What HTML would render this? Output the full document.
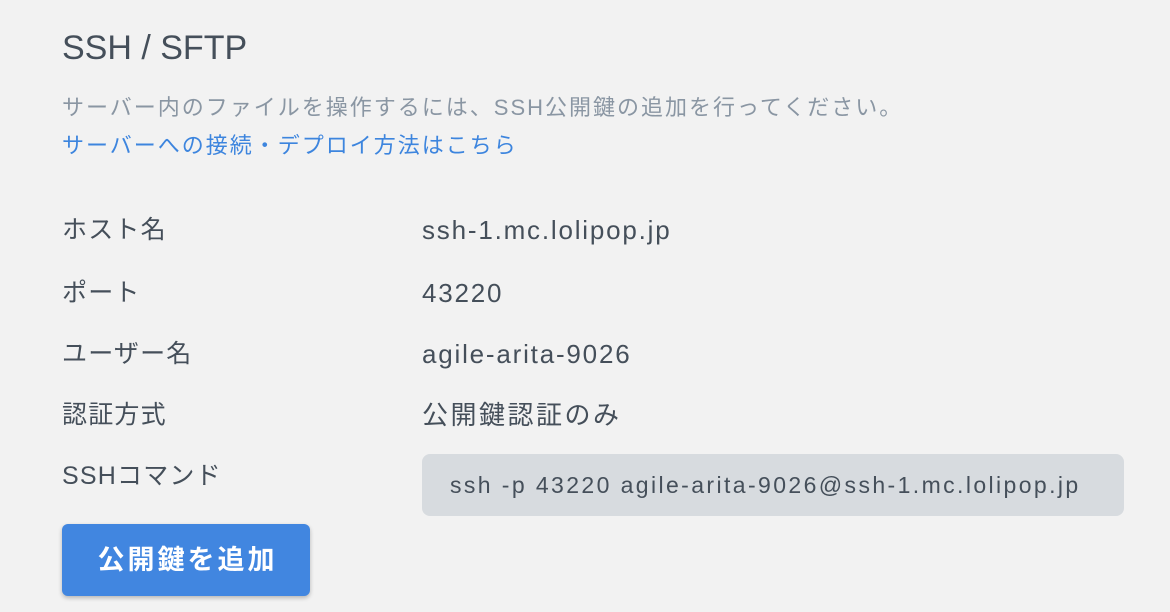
<!DOCTYPE html>
<html><head><meta charset="utf-8"><style>
body{margin:0;width:1170px;height:612px;background:#f2f2f2;font-family:"Liberation Sans","Noto Sans CJK JP",sans-serif;color:#454f5a;position:relative;overflow:hidden}
.a{position:absolute;white-space:nowrap}
.t{left:62px;top:27px;font-size:34px;line-height:42px}
.d{left:62px;top:93px;font-size:22px;line-height:30px;color:#8a96a3;letter-spacing:2px}
.l{left:62px;top:131px;font-size:22px;line-height:30px;color:#3d85de;letter-spacing:2px}
.k{left:62px;font-size:25px;line-height:32px;letter-spacing:1.2px}
.v{left:422px;font-size:26px;line-height:32px;letter-spacing:1.8px}
.code{left:422px;top:454px;width:702px;height:62px;background:#d7dbdf;border-radius:8px;font-size:23px;line-height:62px;box-sizing:border-box;padding-left:28px;letter-spacing:2.4px}
.btn{left:62px;top:524px;width:248px;height:72px;background:#4186e0;border-radius:6px;color:#fff;font-size:27px;font-weight:bold;line-height:72px;text-align:center;box-shadow:0 2px 4px rgba(0,0,0,.25);letter-spacing:3px;text-indent:3px}
</style></head><body>
<div class="a t">SSH / SFTP</div>
<div class="a d">サーバー内のファイルを操作するには、SSH公開鍵の追加を行ってください。</div>
<div class="a l">サーバーへの接続・デプロイ方法はこちら</div>
<div class="a k" style="top:214px">ホスト名</div><div class="a v" style="top:214px">ssh-1.mc.lolipop.jp</div>
<div class="a k" style="top:277px">ポート</div><div class="a v" style="top:277px">43220</div>
<div class="a k" style="top:338px">ユーザー名</div><div class="a v" style="top:338px">agile-arita-9026</div>
<div class="a k" style="top:399px">認証方式</div><div class="a v" style="top:399px;letter-spacing:2.5px">公開鍵認証のみ</div>
<div class="a k" style="top:460px">SSHコマンド</div>
<div class="a code">ssh -p 43220 agile-arita-9026@ssh-1.mc.lolipop.jp</div>
<div class="a btn">公開鍵を追加</div>
</body></html>
